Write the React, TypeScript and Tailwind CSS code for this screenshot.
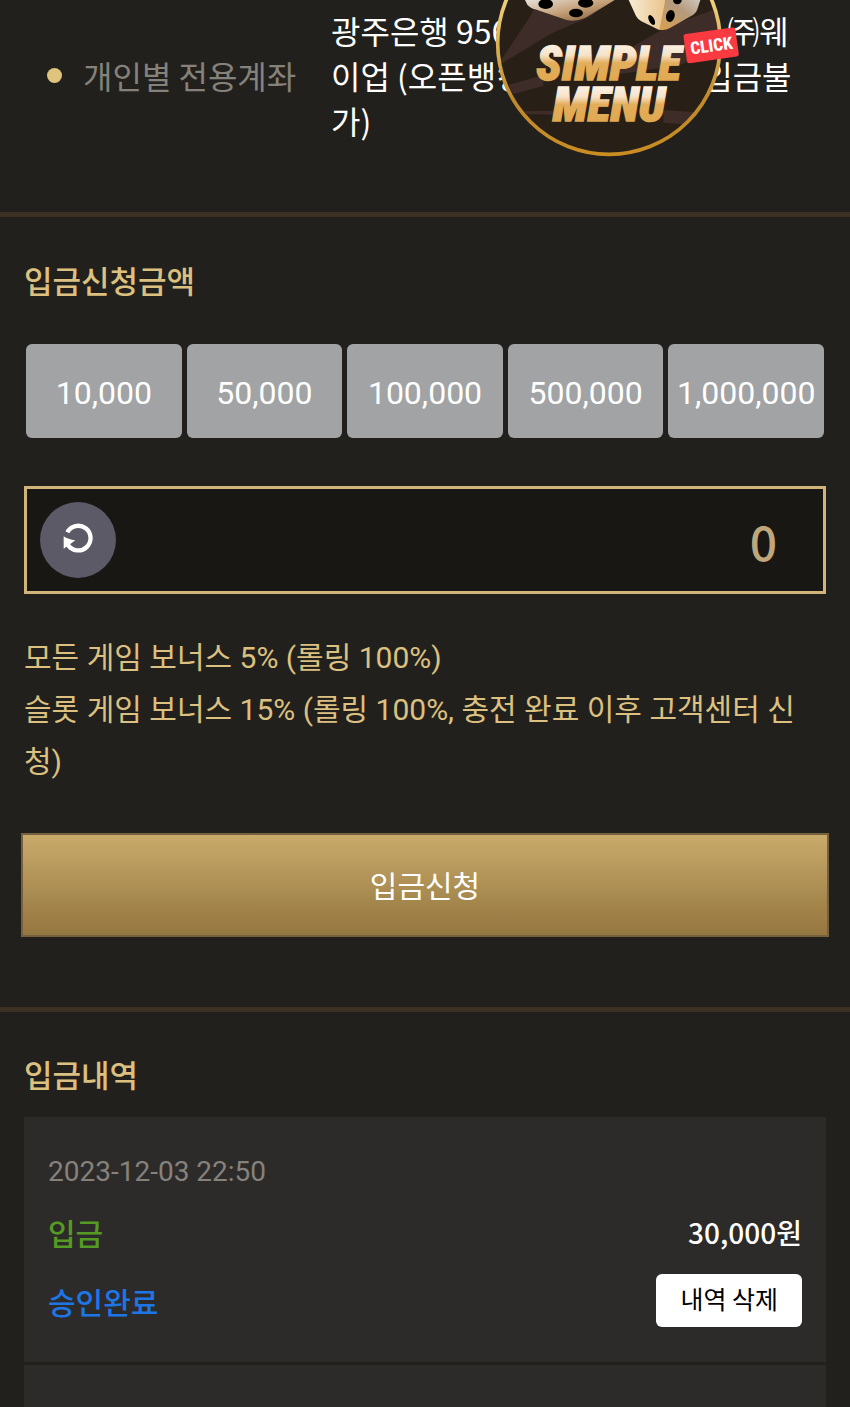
import { useState } from "react";

const AMOUNTS = [10000, 50000, 100000, 500000, 1000000];

const HISTORY = [
  { date: "2023-12-03 22:50", type: "입금", amount: "30,000원", status: "승인완료" },
];

const SimpleMenuBadge = () => (
  <a href="#menu" aria-label="Simple menu" className="absolute top-0 right-[90px] block">
    <svg width="280" height="170" viewBox="0 0 840 510" aria-hidden="true">
      <defs>
        <linearGradient id="ring" x1="0" y1="0" x2="0" y2="1">
          <stop offset="0.3" stopColor="#f0d27c" />
          <stop offset="0.75" stopColor="#c08a2c" />
          <stop offset="1" stopColor="#c98d22" />
        </linearGradient>
        <linearGradient id="simple" gradientUnits="userSpaceOnUse" x1="0" y1="137" x2="0" y2="241">
          <stop offset="0" stopColor="#fbf0e0" />
          <stop offset="0.28" stopColor="#f6e2c8" />
          <stop offset="0.5" stopColor="#e3ae5c" />
          <stop offset="1" stopColor="#e0a850" />
        </linearGradient>
        <linearGradient id="menu" gradientUnits="userSpaceOnUse" x1="0" y1="262" x2="0" y2="365">
          <stop offset="0" stopColor="#fbf0e0" />
          <stop offset="0.28" stopColor="#f6e2c8" />
          <stop offset="0.5" stopColor="#e3ae5c" />
          <stop offset="1" stopColor="#e0a850" />
        </linearGradient>
        <linearGradient id="dieLeft" x1="0" y1="0" x2="1" y2="1">
          <stop offset="0" stopColor="#e6e0d8" />
          <stop offset="0.5" stopColor="#c4a078" />
          <stop offset="1" stopColor="#7a5430" />
        </linearGradient>
        <linearGradient id="dieRight" x1="0" y1="0" x2="1" y2="0">
          <stop offset="0" stopColor="#f6ecd6" />
          <stop offset="1" stopColor="#eac48a" />
        </linearGradient>
        <linearGradient id="dieSide" x1="0" y1="1" x2="1" y2="0">
          <stop offset="0" stopColor="#d9a050" />
          <stop offset="0.6" stopColor="#b59a7c" />
          <stop offset="1" stopColor="#cfc6bc" />
        </linearGradient>
        <clipPath id="disc">
          <circle cx="387" cy="129" r="330" />
        </clipPath>
      </defs>
      <circle cx="387" cy="129" r="334" fill="#281f17" />
      <g clipPath="url(#disc)" fill="#3e2c28">
        <path d="M50 200L150 50L165 20L390 0L330 50L215 100Z" />
        <path d="M330 215L560 80L740 15V130L600 195L420 222Z" />
        <path d="M85 255L190 225V258L100 282Z" />
        <path d="M130 334L225 332V344L140 342Z" />
        <path d="M550 330L680 338L640 376L550 368Z" />
      </g>
      <circle cx="387" cy="129" r="334" fill="none" stroke="url(#ring)" strokeWidth="11" />
      <path d="M135 0L142 14Q148 22 165 28L260 60Q285 66 315 54L365 24L404 0Z" fill="url(#dieLeft)" />
      <ellipse cx="197" cy="12" rx="22" ry="15" />
      <ellipse cx="317" cy="9" rx="23" ry="14" />
      <ellipse cx="288" cy="39" rx="21" ry="13" />
      <path d="M446 0L468 48Q472 56 484 64L530 86Q540 92 552 88L556 0Z" fill="url(#dieRight)" />
      <path d="M556 0L538 89Q556 92 570 84L640 44Q650 38 652 28L661 0Z" fill="url(#dieSide)" />
      <ellipse cx="515" cy="60" rx="8" ry="16" transform="rotate(-28 515 60)" />
      <ellipse cx="571" cy="48" rx="13" ry="18" transform="rotate(15 571 48)" />
      <ellipse cx="592" cy="0" rx="13" ry="13" />
      <g
        className="font-['Roboto_Condensed','Open_Sans_Condensed','Roboto',sans-serif] font-black italic"
        fontSize="143"
        textAnchor="middle"
        strokeWidth="4"
      >
        <text x="386" y="239" fill="url(#simple)" stroke="url(#simple)">SIMPLE</text>
        <text x="387" y="364" fill="url(#menu)" stroke="url(#menu)">MENU</text>
      </g>
      <g transform="rotate(-8 694 136)">
        <rect x="615" y="92" width="157" height="88" rx="8" fill="#f93a40" />
        <text
          x="694"
          y="155"
          fill="#fff"
          fontSize="52"
          textAnchor="middle"
          className="font-['Roboto_Condensed','Open_Sans_Condensed','Roboto',sans-serif] font-extrabold"
        >
          CLICK
        </text>
      </g>
    </svg>
  </a>
);

const ResetIcon = () => (
  <svg viewBox="0 0 228 228" className="size-full" aria-hidden="true">
    <path d="M82 91A37 37 0 1 1 84 129" fill="none" stroke="#fff" strokeWidth="13" />
    <path d="M71 103Q84 112 106 115L94 124L71 140Z" fill="#fff" />
  </svg>
);

const App = () => {
  const [amount, setAmount] = useState(0);

  return (
    <main className="relative flex min-h-screen w-full flex-col overflow-hidden bg-[#22201d] font-['Noto_Sans_CJK_KR',sans-serif] text-white">
      {/* Account */}
      <section className="flex items-center border-b-5 border-[#3c3123] pt-2 pr-[46px] pb-[69px] pl-[47px] text-[32px] leading-[45px]">
        <span className="mr-[21px] size-[15px] shrink-0 rounded-full bg-[#dfc47e]" />
        <span className="w-[248px] shrink-0 text-[#85817b]">개인별 전용계좌</span>
        <p>광주은행 956-000-00000-00 ㈜웨이업 (오픈뱅킹, 및 간편송금 입금불가)</p>
      </section>
      <SimpleMenuBadge />

      {/* Deposit request */}
      <form
        className="border-b-5 border-[#3c3123] px-6 pt-[41px] pb-[70px]"
        onSubmit={(e) => e.preventDefault()}
      >
        <h2 className="text-[31px] leading-11 font-medium text-[#dcc080]">입금신청금액</h2>

        <div className="mt-[42px] grid grid-cols-5 gap-[5px] px-[2px]">
          {AMOUNTS.map((value) => (
            <button
              key={value}
              type="button"
              onClick={() => setAmount(amount + value)}
              className="h-[94px] rounded-md bg-[#a2a3a5] pt-1 text-center font-['Roboto',sans-serif] text-[32px]"
            >
              {value.toLocaleString("en-US")}
            </button>
          ))}
        </div>

        <div className="mt-12 flex h-[108px] items-center border-3 border-[#d0b47a] bg-[#181713] pr-[46px] pl-[13px]">
          <button
            type="button"
            aria-label="초기화"
            onClick={() => setAmount(0)}
            className="size-[76px] shrink-0 rounded-full bg-[#5b5a66]"
          >
            <ResetIcon />
          </button>
          <input
            type="text"
            aria-label="입금신청금액"
            readOnly
            value={amount.toLocaleString("en-US")}
            className="min-w-0 flex-1 bg-transparent text-right text-[48px] font-medium text-[#c0a67c] outline-none"
          />
        </div>

        <p className="mt-[38px] font-['Roboto','Noto_Sans_CJK_KR',sans-serif] text-[30px] leading-[52px] text-[#dcc080]">
          모든 게임 보너스 5% (롤링 100%)
          <br />
          슬롯 게임 보너스 15% (롤링 100%, 충전 완료 이후 고객센터 신청)
        </p>

        <div className="-mx-[3px] mt-[45px]">
          <button
            type="submit"
            className="h-26 w-full border-2 border-[#76613e] bg-linear-to-b from-[#c8ab6b] to-[#94763f] pb-[2px] text-[30px]"
          >
            입금신청
          </button>
        </div>
      </form>

      {/* Deposit history */}
      <section className="flex flex-1 flex-col px-6 pt-10">
        <h2 className="text-[31px] leading-11 font-medium text-[#dcc080]">입금내역</h2>

        <ul className="mt-[21px] flex flex-1 flex-col gap-[3px]">
          {HISTORY.map((item) => (
            <li key={item.date} className="bg-[#2d2b2a] px-6 py-[35px]">
              <time className="block font-['Roboto',sans-serif] text-[28px] leading-10 text-[#85817b]">
                {item.date}
              </time>
              <div className="mt-[18px] flex items-center justify-between leading-11 font-medium">
                <span className="text-[30px] text-[#559a23]">{item.type}</span>
                <span className="text-[28px]">{item.amount}</span>
              </div>
              <div className="mt-5 flex items-center justify-between">
                <span className="text-[30px] leading-11 font-medium text-[#1e76e6]">{item.status}</span>
                <button
                  type="button"
                  className="h-[53px] rounded-md bg-white px-6 pb-1 text-[25px] text-black"
                >
                  내역 삭제
                </button>
              </div>
            </li>
          ))}
          <li className="min-h-10 flex-1 bg-[#2d2b2a]" />
        </ul>
      </section>
    </main>
  );
};

export default App;
